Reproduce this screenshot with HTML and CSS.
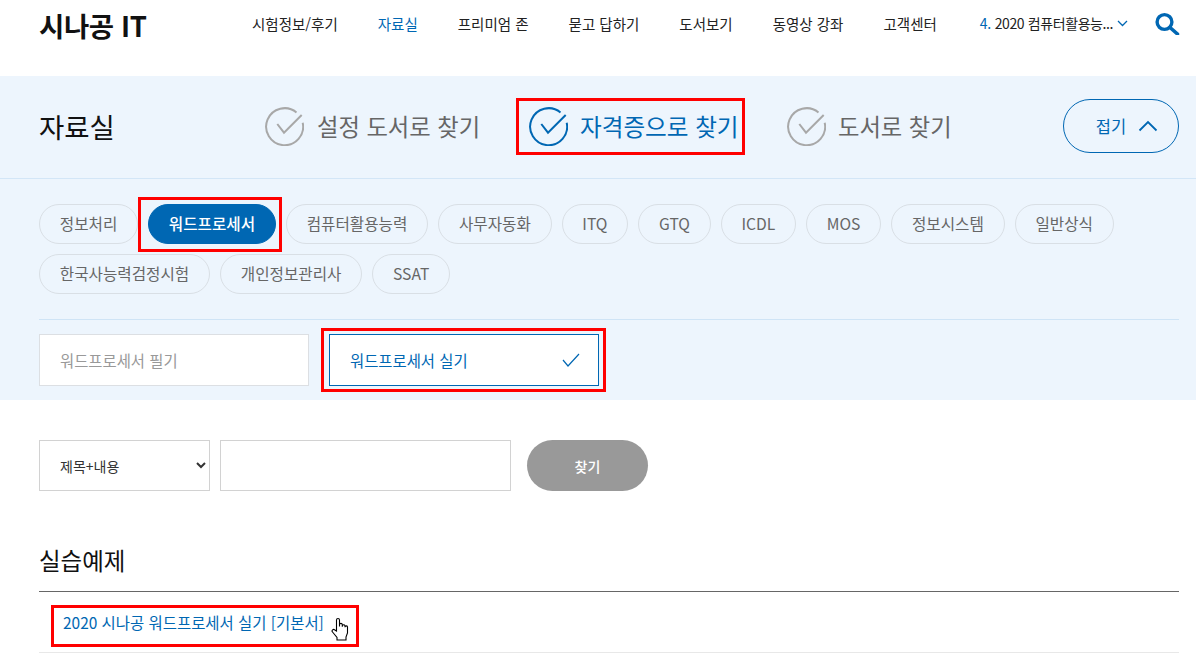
FILE: index.html
```html
<!DOCTYPE html>
<html lang="ko">
<head>
<meta charset="utf-8">
<title>시나공 IT 자료실</title>
<link rel="stylesheet" href="styles.css">
</head>
<body>
<header class="top">
  <a class="logo">시나공 IT</a>
  <nav class="gnb">
    <a>시험정보/후기</a>
    <a class="on">자료실</a>
    <a>프리미엄 존</a>
    <a>묻고 답하기</a>
    <a>도서보기</a>
    <a>동영상 강좌</a>
    <a>고객센터</a>
  </nav>
  <div class="picker"><span class="num">4.</span> 2020 컴퓨터활용능...
    <svg class="picker-chev" width="11" height="7" viewBox="0 0 11 7"><path d="M1 1l4.500 4.500L10 1" fill="none" stroke="#0067b3" stroke-width="1.300"/></svg>
  </div>
  <svg class="search-ico" width="25" height="24" viewBox="0 0 25 24"><circle cx="9.500" cy="11" r="7.400" fill="none" stroke="#0067b3" stroke-width="3.400"/><path d="M15 16.500l7.500 6.500" stroke="#0067b3" stroke-width="3.600" stroke-linecap="round"/></svg>
</header>

<section class="band">
  <h1 class="band-title">자료실</h1>
  <div class="tabs">
    <a class="tab tab-a">
      <svg class="tab-ico" width="39" height="39" viewBox="0 0 39 39"><path d="M31.500 5.500A18.500 18.500 0 1 0 37.700 15.700" fill="none" stroke="#a8a8a8" stroke-width="2"/><path d="M12.300 17L19 25.700 36.700 8" fill="none" stroke="#a8a8a8" stroke-width="2"/></svg>
      설정 도서로 찾기
    </a>
    <a class="tab tab-b on marked">
      <svg class="tab-ico" width="39" height="39" viewBox="0 0 39 39"><path d="M31.500 5.500A18.500 18.500 0 1 0 37.700 15.700" fill="none" stroke="#0067b3" stroke-width="2"/><path d="M12.300 17L19 25.700 36.700 8" fill="none" stroke="#0067b3" stroke-width="2"/></svg>
      자격증으로 찾기
    </a>
    <a class="tab tab-c">
      <svg class="tab-ico" width="39" height="39" viewBox="0 0 39 39"><path d="M31.500 5.500A18.500 18.500 0 1 0 37.700 15.700" fill="none" stroke="#a8a8a8" stroke-width="2"/><path d="M12.300 17L19 25.700 36.700 8" fill="none" stroke="#a8a8a8" stroke-width="2"/></svg>
      도서로 찾기
    </a>
  </div>
  <a class="fold">접기
    <svg width="20" height="12" viewBox="0 0 20 12"><path d="M1.500 10.500L10 2l8.500 8.500" fill="none" stroke="#0067b3" stroke-width="1.800"/></svg>
  </a>
</section>

<section class="filter">
  <div class="pills">
    <a class="pill">정보처리</a>
    <a class="pill on marked">워드프로세서</a>
    <a class="pill">컴퓨터활용능력</a>
    <a class="pill">사무자동화</a>
    <a class="pill">ITQ</a>
    <a class="pill">GTQ</a>
    <a class="pill">ICDL</a>
    <a class="pill">MOS</a>
    <a class="pill">정보시스템</a>
    <a class="pill">일반상식</a>
    <a class="pill">한국사능력검정시험</a>
    <a class="pill">개인정보관리사</a>
    <a class="pill">SSAT</a>
  </div>
  <div class="subs">
    <a class="sub">워드프로세서 필기</a>
    <a class="sub on marked">워드프로세서 실기
      <svg width="18" height="14" viewBox="0 0 18 14"><path d="M1 7l5 6L17 1" fill="none" stroke="#0067b3" stroke-width="1.200"/></svg>
    </a>
  </div>
</section>

<form class="search">
  <select class="field sel"><option>제목+내용</option></select>
  <input class="field txt" type="text">
  <button class="go" type="button">찾기</button>
</form>

<section class="list">
  <h2 class="list-title">실습예제</h2>
  <div class="row">
    <a class="row-link marked">2020 시나공 워드프로세서 실기 [기본서]
      <svg class="hand" width="18" height="24" viewBox="0 0 18 24"><path d="M5.500 14V3a1.500 1.500 0 0 1 3 0v6.500-1.700a1.400 1.400 0 0 1 2.800 0v2-1a1.400 1.400 0 0 1 2.700 0v1.500-.5a1.300 1.300 0 0 1 2.500 0V16l-1.500 4v3H6v-2.500L1.500 15a1.500 1.500 0 0 1 2.300-2z" fill="#fff" stroke="#000" stroke-width="1.100"/></svg>
    </a>
  </div>
</section>
</body>
</html>
```
FILE: styles.css
```css
*, *::after { box-sizing: border-box; }
html, body { margin: 0; padding: 0; }
body {
  width: 1196px;
  height: 660px;
  overflow: hidden;
  background: #fff;
  color: #111;
  font-family: "Noto Sans CJK KR", "Noto Sans", sans-serif;
}
a { display: block; }

.top {
  height: 76px;
  padding: 0 16px 30px 39px;
  display: flex;
  align-items: center;
}
.logo { font-size: 27.500px; font-weight: 700; width: 213px; margin-top: 4px; letter-spacing: -0.4px; color: #111; }
.gnb { display: flex; gap: 40px; font-size: 14.500px; color: #222; white-space: nowrap; }
.gnb .on { color: #0067b3; }
.picker {
  margin-left: 43px;
  font-size: 14px;
  letter-spacing: -0.4px;
  color: #222;
  white-space: nowrap;
  display: flex;
  align-items: center;
  gap: 4px;
}
.picker .num { color: #0067b3; }
.picker-chev { margin-left: 0; }
.search-ico { margin-left: auto; }

.band {
  height: 103px;
  padding: 0 17px 2px 39px;
  background: #edf5fd;
  border-bottom: 1px solid #d3e6f7;
  display: flex;
  align-items: center;
}
.band-title { margin: 0; width: 226px; font-size: 27.500px; font-weight: 400; color: #111; }
.tabs { display: flex; align-items: center; }
.tab {
  display: flex;
  align-items: center;
  gap: 13px;
  font-size: 23.300px;
  color: #666;
  white-space: nowrap;
  position: relative;
}
.tab-a { width: 264px; }
.tab-b { width: 258px; color: #0067b3; gap: 12px; font-size: 23.600px; }
.tab-c { gap: 12px; }
.fold {
  margin-left: auto;
  width: 116px;
  height: 54px;
  padding-left: 12px;
  border: 1px solid #0067b3;
  border-radius: 27px;
  color: #0067b3;
  font-size: 16.500px;
  display: flex;
  align-items: center;
  justify-content: center;
  gap: 12px;
}

.filter {
  height: 221px;
  padding: 25px 17px 0 39px;
  background: #edf5fd;
}
.pills {
  display: flex;
  flex-wrap: wrap;
  gap: 10px;
  padding-bottom: 26px;
  border-bottom: 1px solid #cfe4f6;
  height: 116px;
  align-content: flex-start;
}
.pill {
  height: 40px;
  line-height: 38px;
  padding: 0 19.750px;
  border: 1px solid #d9dfe5;
  border-radius: 20px;
  font-size: 15.650px;
  color: #666;
  position: relative;
  white-space: nowrap;
}
.pill.on { background: #0067b3; border-color: #0067b3; color: #fff; font-weight: 500; }
.subs { display: flex; gap: 20px; margin-top: 14px; }
.sub {
  width: 270px;
  height: 52px;
  padding: 0 18px 0 20px;
  background: #fff;
  border: 1px solid #dcdfe3;
  font-size: 15.400px;
  color: #999;
  display: flex;
  align-items: center;
  justify-content: space-between;
  position: relative;
}
.sub.on { border-color: #0067b3; color: #0067b3; }

.search { display: flex; margin: 40px 0 0 39px; height: 51px; }
.field { height: 51px; border: 1px solid #d2d2d2; background: #fff; border-radius: 0; }
.sel {
  width: 171px;
  padding: 0 0 0 16px;
  font: 14px "Noto Sans CJK KR", sans-serif;
  color: #333;
}
.txt { width: 291px; margin-left: 10px; }
.go {
  width: 121px;
  margin-left: 16px;
  border: 0;
  border-radius: 26px;
  background: #999;
  color: #fff;
  font: 500 14px "Noto Sans CJK KR", sans-serif;
}

.list { margin: 0 17px 0 39px; }
.list-title {
  margin: 0;
  height: 101px;
  padding-top: 51px;
  border-bottom: 1px solid #666;
  font-size: 23.500px;
  font-weight: 400;
  line-height: 36px;
  color: #111;
}
.row { height: 61px; border-bottom: 1px solid #e8e8e8; padding: 13px 0 0 24px; }
.row-link {
  position: relative;
  display: block;
  font-size: 15.450px;
  line-height: 34px;
  color: #0067b3;
  white-space: nowrap;
}
.hand { position: absolute; left: 268px; top: 12px; }

/* red annotation frames drawn over the marked controls */
.marked::after {
  content: "";
  position: absolute;
  border: 3px solid #f00;
  pointer-events: none;
}
.tab-b.marked::after { left: -13px; right: 42px; top: -9px; bottom: -9px; }
.pill.marked::after { left: -11px; right: -7px; top: -8px; bottom: -9px; }
.sub.marked::after { left: -9px; right: -8px; top: -7px; bottom: -7px; }
.row-link.marked::after { left: -12px; width: 308px; top: 0; height: 42px; }
```
